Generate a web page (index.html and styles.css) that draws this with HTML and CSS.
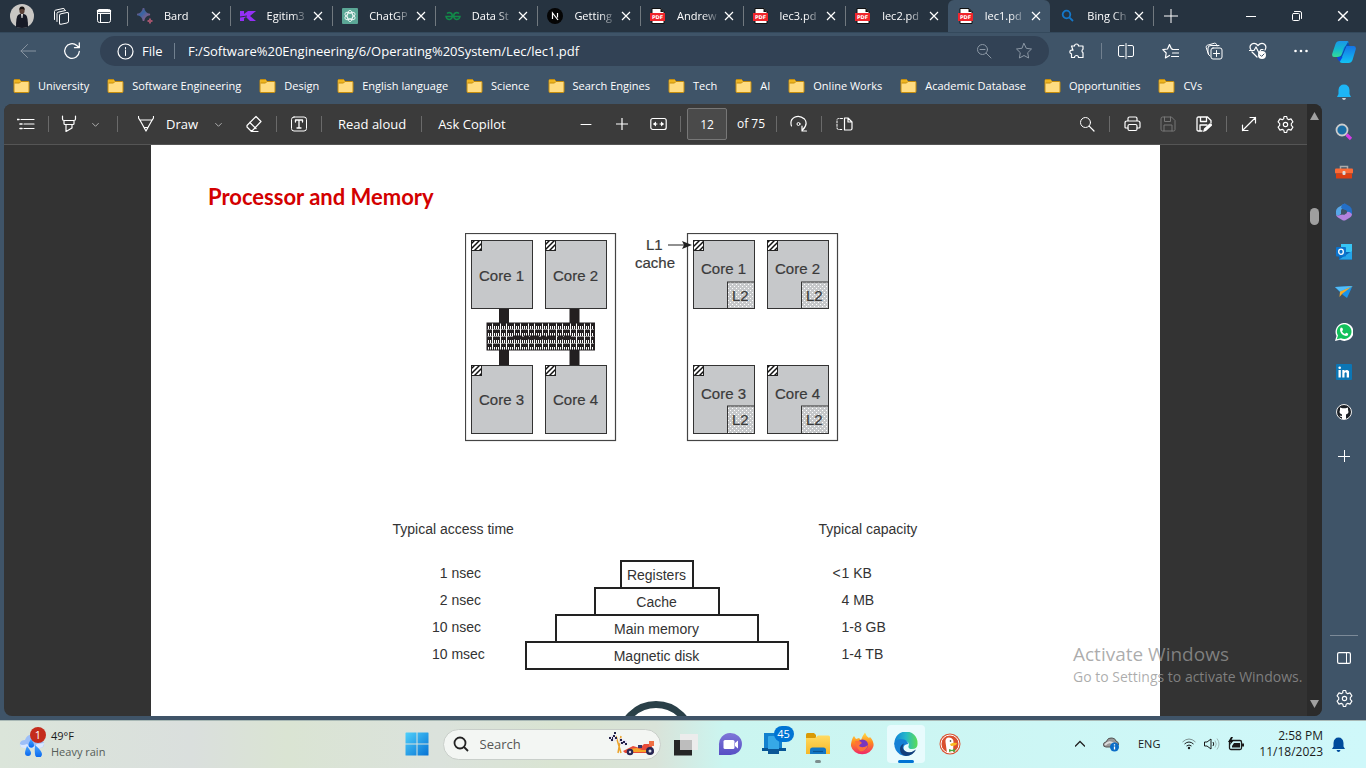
FILE: index.html
```html
<!DOCTYPE html>
<html lang="en">
<head>
<meta charset="utf-8">
<title>lec1.pdf</title>
<link rel="stylesheet" href="styles.css">
</head>
<body>
<svg class="defs" aria-hidden="true">
  <defs>
    <linearGradient id="g-win" x1="0" y1="0" x2="1" y2="1"><stop offset="0" stop-color="#4fd0fb"/><stop offset="1" stop-color="#0672d4"/></linearGradient>
    <linearGradient id="g-copL" x1="0" y1="0" x2="0" y2="1"><stop offset="0" stop-color="#1b96e8"/><stop offset=".5" stop-color="#13b8cf"/><stop offset="1" stop-color="#35dd95"/></linearGradient>
    <linearGradient id="g-copR" x1="0" y1="0" x2="0" y2="1"><stop offset="0" stop-color="#1573e6"/><stop offset="1" stop-color="#11c3f3"/></linearGradient>
    <linearGradient id="g-bard" x1="0" y1="0" x2="1" y2="1"><stop offset="0" stop-color="#b5485f"/><stop offset=".4" stop-color="#3565a5"/><stop offset="1" stop-color="#b85a77"/></linearGradient>
    <linearGradient id="g-edge" x1="0" y1="0" x2="1" y2="0"><stop offset="0" stop-color="#1183d8"/><stop offset=".5" stop-color="#25b8c9"/><stop offset="1" stop-color="#5bdd55"/></linearGradient>
    <linearGradient id="g-fox" x1="0" y1="0" x2="0" y2="1"><stop offset="0" stop-color="#ffe14a"/><stop offset=".45" stop-color="#ff8a1f"/><stop offset="1" stop-color="#f0256a"/></linearGradient>
    <linearGradient id="g-chat" x1="0" y1="0" x2="0" y2="1"><stop offset="0" stop-color="#7f76d8"/><stop offset="1" stop-color="#574fc4"/></linearGradient>
    <linearGradient id="g-drop" x1="0" y1="0" x2="0" y2="1"><stop offset="0" stop-color="#49a5ff"/><stop offset="1" stop-color="#0968ef"/></linearGradient>
    <linearGradient id="g-file" x1="0" y1="0" x2="0" y2="1"><stop offset="0" stop-color="#ffdb62"/><stop offset="1" stop-color="#f6b829"/></linearGradient>
    <pattern id="p-hatch" width="5" height="5" patternUnits="userSpaceOnUse"><rect width="5" height="5" fill="#fff"/><path d="M-1 6L6 -1M-1 1L1 -1M4 6L6 4" stroke="#111" stroke-width="1.500"/></pattern>
    <pattern id="p-dots" width="4" height="4" patternUnits="userSpaceOnUse"><rect width="4" height="4" fill="#c6c8ca"/><path d="M0 0h1v1H0zM2 2h1v1H2z" fill="#fff"/></pattern>
    <pattern id="p-mesh" x="487" y="323" width="14" height="7" patternUnits="userSpaceOnUse"><rect width="14" height="7" fill="#231f20"/><path d="M1 3h1v3H1zM3 3h1v3H3zM7 3h1v3H7zM9 3h1v3H9zM11 3h1v3H11zM5 0h1v7H5zM13 0h1v7H13zM0 6h14v.500H0z" fill="#fff"/></pattern>
    <symbol id="i-folder" viewBox="0 0 16 16"><path d="M.5 2.500Q.5 1.500 1.500 1.500H6L7.500 3.500H15Q15.500 3.500 15.500 4.500V13.500Q15.500 14.500 14.500 14.500H1.500Q.5 14.500 .5 13.500Z" fill="#ffdc81" stroke="#c68d0c"/><path d="M1 2h5l1 1.500L6 5H1Z" fill="#efb51f"/><path d="M1 5H6L7.500 3.500" stroke="#c68d0c" fill="none"/></symbol>
    <symbol id="i-x" viewBox="0 0 10 10"><path d="M1 1L9 9M9 1L1 9" fill="none" stroke="currentColor" stroke-width="1.2"/></symbol>
    <symbol id="i-pdf" viewBox="0 0 16 16"><path d="M2 .5H11L14 3.500V15.500H2Z" fill="#fff" stroke="#111"/><path d="M10.500 0V4H14Z" fill="#111"/><rect x="0" y="5" width="15" height="8" fill="#f0252b"/><text x="7.500" y="11" text-anchor="middle" class="pdf-mark">PDF</text></symbol>
    <symbol id="i-chev" viewBox="0 0 10 10"><path d="M1.500 3.500L5 7L8.500 3.500" fill="none" stroke="currentColor"/></symbol>
    <symbol id="i-gear" viewBox="0 0 20 20"><path d="M8.200 2.200L8.700 1.600H11.300L11.800 4L13.400 4.900L15.800 4.100L17.800 7.200L16.100 9V11L17.800 12.800L15.800 15.900L13.400 15.100L11.800 16L11.300 18.400H8.700L8.200 16L6.600 15.100L4.200 15.900L2.200 12.800L3.900 11V9L2.200 7.200L4.200 4.100L6.600 4.900L8.200 4Z" fill="none" stroke="currentColor" stroke-width="1.200" stroke-linejoin="round"/><circle cx="10" cy="10" r="2.300" fill="none" stroke="currentColor" stroke-width="1.200"/></symbol>
  </defs>
</svg>

<header class="tabbar">
  <div class="tabbar-tools">
    <button class="avatar" aria-label="Profile"><svg width="24" height="24" viewBox="0 0 24 24"><circle cx="12" cy="12" r="12" fill="#c9c7c4"/><path d="M6 23Q6 13 8 11L12 9L16 11Q18 13 18 23Q12 25 6 23Z" fill="#171a26"/><path d="M11 10h2l-.500 4h-1Z" fill="#ddd"/><ellipse cx="12" cy="6.500" rx="2.600" ry="3.500" fill="#5a4036"/><path d="M9.400 6Q9 2.500 12 2.500T14.600 6Q12 4 9.400 6Z" fill="#17110f"/></svg></button>
    <button class="icon-btn" aria-label="Workspaces"><svg width="18" height="18" viewBox="0 0 18 18" class="ln"><rect x="6.500" y="5.500" width="9" height="10.500" rx="1.500" transform="skewY(-12) translate(0 3)"/><path d="M4 14.500V6.500Q4 5.500 5 5.200L12.500 3.500M1.500 12.500V4.500Q1.500 3.500 2.500 3.200L10 1.500Q11.500 1.300 11.700 2.500"/></svg></button>
    <button class="icon-btn" aria-label="Tab actions"><svg width="16" height="16" viewBox="0 0 16 16" class="ln"><rect x="1.500" y="1.500" width="13" height="13" rx="2"/><path d="M2 3H14" stroke-width="2.500"/><path d="M1.500 5.500H14.500M4.500 6V14"/></svg></button>
  </div>
  <nav class="tabs" aria-label="Tabs">
    <div class="tab"><svg width="16" height="16" viewBox="0 0 16 16"><path d="M6.500 0Q7.200 5.800 13 6.500Q7.200 7.200 6.500 13Q5.800 7.200 0 6.500Q5.800 5.800 6.500 0Z" fill="url(#g-bard)" stroke="url(#g-bard)" stroke-width="1.500"/><path d="M13 10.500Q13.300 12.700 15.500 13Q13.300 13.300 13 15.500Q12.700 13.300 10.500 13Q12.700 12.700 13 10.500Z" fill="#a8566f" stroke="#a8566f"/></svg><span>Bard</span><button aria-label="Close tab"><svg width="10" height="10"><use href="#i-x"/></svg></button></div>
    <div class="tab"><svg width="16" height="16" viewBox="0 0 16 16"><path d="M0 3H4V6L8 3H16L10 8L16 13H10L6 9L4 10.500V13H0Z" fill="#9430f5"/><path d="M0 9L7 8" stroke="#263340"/></svg><span>Egitim3</span><button aria-label="Close tab"><svg width="10" height="10"><use href="#i-x"/></svg></button></div>
    <div class="tab"><svg width="16" height="16" viewBox="0 0 16 16"><rect width="16" height="16" rx="1" fill="#5ba796"/><g fill="none" stroke="#fff" stroke-width=".8"><ellipse cx="8" cy="8" rx="2.800" ry="5.600"/><ellipse cx="8" cy="8" rx="2.800" ry="5.600" transform="rotate(60 8 8)"/><ellipse cx="8" cy="8" rx="2.800" ry="5.600" transform="rotate(120 8 8)"/></g></svg><span>ChatGP</span><button aria-label="Close tab"><svg width="10" height="10"><use href="#i-x"/></svg></button></div>
    <div class="tab"><svg width="16" height="16" viewBox="0 0 16 16" fill="none" stroke="#128a49" stroke-width="1.500"><path d="M2 5.500Q3 4.500 4.500 4.500Q7.300 5 7.300 8T4.500 11.500Q1.500 11.500 1 8.500H15Q14.500 11.500 11.500 11.500Q8.700 11 8.700 8T11.500 4.500Q13 4.500 14 5.500"/></svg><span>Data St</span><button aria-label="Close tab"><svg width="10" height="10"><use href="#i-x"/></svg></button></div>
    <div class="tab"><svg width="16" height="16" viewBox="0 0 16 16"><circle cx="8" cy="8" r="8" fill="#050505"/><path d="M5.500 11V5L11 12M10.500 5V9.500" fill="none" stroke="#fff" stroke-width="1.200"/></svg><span>Getting</span><button aria-label="Close tab"><svg width="10" height="10"><use href="#i-x"/></svg></button></div>
    <div class="tab"><svg width="16" height="16"><use href="#i-pdf"/></svg><span>Andrew</span><button aria-label="Close tab"><svg width="10" height="10"><use href="#i-x"/></svg></button></div>
    <div class="tab"><svg width="16" height="16"><use href="#i-pdf"/></svg><span>lec3.pd</span><button aria-label="Close tab"><svg width="10" height="10"><use href="#i-x"/></svg></button></div>
    <div class="tab"><svg width="16" height="16"><use href="#i-pdf"/></svg><span>lec2.pd</span><button aria-label="Close tab"><svg width="10" height="10"><use href="#i-x"/></svg></button></div>
    <div class="tab active"><svg width="16" height="16"><use href="#i-pdf"/></svg><span>lec1.pd</span><button aria-label="Close tab"><svg width="10" height="10"><use href="#i-x"/></svg></button></div>
    <div class="tab after-active"><svg width="16" height="16" viewBox="0 0 16 16" fill="none" stroke="#1478ca" stroke-width="1.800"><circle cx="6.500" cy="6.500" r="3.800"/><path d="M9.300 9.300L13 13"/></svg><span>Bing Ch</span><button aria-label="Close tab"><svg width="10" height="10"><use href="#i-x"/></svg></button></div>
    <button class="new-tab" aria-label="New tab"><svg width="14" height="14" viewBox="0 0 14 14" class="ln"><path d="M7 0V14M0 7H14"/></svg></button>
  </nav>
  <div class="win-controls">
    <button aria-label="Minimize"><svg width="10" height="10" viewBox="0 0 10 10" class="ln"><path d="M0 5.500H10"/></svg></button>
    <button aria-label="Restore"><svg width="10" height="10" viewBox="0 0 10 10" class="ln"><rect x=".5" y="2.500" width="7" height="7" rx="1"/><path d="M2.500 .5H8Q9.500 .5 9.500 2V7.500"/></svg></button>
    <button aria-label="Close"><svg width="12" height="12"><use href="#i-x"/></svg></button>
  </div>
</header>

<div class="browser">
  <div class="browser-main">
    <div class="navbar">
      <button class="nav-btn dim" aria-label="Back"><svg width="16" height="16" viewBox="0 0 16 16" class="ln"><path d="M16 8H1M7.500 1.500L1 8L7.500 14.500"/></svg></button>
      <button class="nav-btn" aria-label="Refresh"><svg width="18" height="18" viewBox="0 0 18 18" class="ln"><path d="M16.300 9.500A7.300 7.300 0 1 1 13.800 3.500L16 5.500M16.300 1V5.700H11.500" stroke-width="1.300"/></svg></button>
      <div class="address">
        <svg width="17" height="17" viewBox="0 0 17 17" class="ln"><circle cx="8.500" cy="8.500" r="7.500" stroke-width="1.200"/><path d="M8.500 7.500V12.500M8.500 4.500V6"/></svg>
        <span class="scheme">File</span>
        <span class="vsep"></span>
        <input type="text" aria-label="Address" value="F:/Software%20Engineering/6/Operating%20System/Lec/lec1.pdf">
        <button class="addr-btn" aria-label="Zoom"><svg width="16" height="16" viewBox="0 0 16 16" class="ln"><circle cx="6.500" cy="6.500" r="5"/><path d="M4 6.500H9M10.200 10.200L15 15"/></svg></button>
        <button class="addr-btn" aria-label="Favorite"><svg width="18" height="18" viewBox="0 0 18 18" class="ln"><path d="M9 1.500L11.300 6.300L16.500 7L12.700 10.700L13.600 16L9 13.500L4.400 16L5.300 10.700L1.500 7L6.700 6.300Z"/></svg></button>
      </div>
      <div class="nav-actions">
        <button aria-label="Extensions" class="ext"><svg width="16" height="16" viewBox="0 0 16 16" class="ln"><path d="M2.500 3H5.500A2 2 0 0 1 9.500 3H14V6.300A2 2 0 0 0 14 9.800V14.500H9.500A2 2 0 0 0 5.500 14.500H2.500V10.800Q.8 10.500 .8 9T2.500 7.200H4Z" stroke-width="1.200"/></svg></button>
        <span class="vsep"></span>
        <button aria-label="Split screen"><svg width="16" height="16" viewBox="0 0 16 16" class="ln"><path d="M6 2.500H2Q.5 2.500 .5 4V12Q.5 13.500 2 13.500H6M10 2.500H14Q15.500 2.500 15.500 4V12Q15.500 13.500 14 13.500H10M8 .5V15.500"/></svg></button>
        <button aria-label="Favorites"><svg width="17" height="17" viewBox="0 0 17 17" class="ln"><path d="M10.500 6H9.500L7.500 1.500L5.500 6L.8 6.600L4.200 10L3.400 15L7.500 12.500M10.500 6.500H16.500M10.500 10H16.500M9.500 13.500H16.500" stroke-width="1.200"/></svg></button>
        <button aria-label="Collections"><svg width="18" height="18" viewBox="0 0 18 18" class="ln"><rect x="6" y="6" width="11" height="11" rx="2"/><path d="M11.500 8.500V14.500M8.500 11.500H14.500M3.500 12.500L1.200 5.500Q.8 4 2.300 3.300L9.500 1.200Q11 1 11.500 2.500L12 4M5 14Q3 13 3 10V6Q3 3.500 6 3.500H14"/></svg></button>
        <button aria-label="Browser essentials"><svg width="18" height="18" viewBox="0 0 18 18" class="ln"><path d="M2 8Q-.2 4.500 2.500 2.200Q6 .2 9 3.500Q12 .2 15.500 2.200Q18 4.500 16 8M3 10L8 15M.5 8.500H5L7 5L10 11L12 7.500H14" stroke-width="1.200"/><circle cx="13" cy="13" r="4" fill="#fff" stroke="none"/><path d="M11.200 13L12.600 14.400L15 12" stroke="#3f5468"/></svg></button>
        <button aria-label="Settings and more" class="more"><svg width="14" height="4" viewBox="0 0 14 4" fill="#fff"><circle cx="1.500" cy="2" r="1.300"/><circle cx="7" cy="2" r="1.300"/><circle cx="12.500" cy="2" r="1.300"/></svg></button>
      </div>
    </div>

    <nav class="bookmarks" aria-label="Favorites">
      <a href="#"><svg width="17" height="16"><use href="#i-folder"/></svg>University</a>
      <a href="#"><svg width="17" height="16"><use href="#i-folder"/></svg>Software Engineering</a>
      <a href="#"><svg width="17" height="16"><use href="#i-folder"/></svg>Design</a>
      <a href="#"><svg width="17" height="16"><use href="#i-folder"/></svg>English language</a>
      <a href="#"><svg width="17" height="16"><use href="#i-folder"/></svg>Science</a>
      <a href="#"><svg width="17" height="16"><use href="#i-folder"/></svg>Search Engines</a>
      <a href="#"><svg width="17" height="16"><use href="#i-folder"/></svg>Tech</a>
      <a href="#"><svg width="17" height="16"><use href="#i-folder"/></svg>AI</a>
      <a href="#"><svg width="17" height="16"><use href="#i-folder"/></svg>Online Works</a>
      <a href="#"><svg width="17" height="16"><use href="#i-folder"/></svg>Academic Database</a>
      <a href="#"><svg width="17" height="16"><use href="#i-folder"/></svg>Opportunities</a>
      <a href="#"><svg width="17" height="16"><use href="#i-folder"/></svg>CVs</a>
    </nav>

    <div class="viewer">
      <div class="viewer-body">
        <div class="pdfbar">
          <div class="pdf-left">
            <button class="tb" aria-label="Contents"><svg width="18" height="14" viewBox="0 0 18 14" class="ln"><path d="M4 2.500H17M7 7H17M7 11.500H17" stroke-width="1.200"/><path d="M0 2.500H2M3 7H5M3 11.500H5" stroke-width="1.600"/></svg></button>
            <span class="tsep"></span>
            <button class="tb hl" aria-label="Highlight"><svg width="16" height="18" viewBox="0 0 16 18" class="ln"><path d="M1.500 1V4Q1.500 5.500 3 5.500H13Q14.500 5.500 14.500 4V1M3 5.500V8.500Q3 9.500 4 9.500H12Q13 9.500 13 8.500V5.500M5 9.500V16.500L11 13V9.500" stroke-width="1.200"/></svg></button>
            <button class="tb chev first" aria-label="Highlight options"><svg width="9" height="9"><use href="#i-chev"/></svg></button>
            <span class="tsep"></span>
            <button class="tb draw"><svg width="16" height="16" viewBox="0 0 16 16" class="ln"><path d="M.5 .5V2L3 6L8 15L13 6L15.500 2V.5M2 4H14M6 11.500L8 15L10 11.500Z" stroke-width="1.200"/></svg>Draw</button>
            <button class="tb chev" aria-label="Draw options"><svg width="9" height="9"><use href="#i-chev"/></svg></button>
            <button class="tb erase" aria-label="Erase"><svg width="16" height="18" viewBox="0 0 16 18" class="ln"><path d="M10 1.500L15 6.500L6.500 15.500H4.500L1 12V10.500ZM3.800 7.500L10 13.500M5 16.500H12" stroke-width="1.200"/></svg></button>
            <span class="tsep"></span>
            <button class="tb" aria-label="Add text"><svg width="16" height="16" viewBox="0 0 16 16" class="ln"><rect x=".5" y="1" width="15" height="14" rx="2.500"/><path d="M4.500 6V4H11.500V6M8 4V12M6 12H10" stroke-width="1.300"/></svg></button>
            <span class="tsep"></span>
            <button class="tb label">Read aloud</button>
            <span class="tsep"></span>
            <button class="tb label">Ask Copilot</button>
          </div>
          <div class="pdf-mid">
            <button class="tb" aria-label="Zoom out"><svg width="12" height="12" viewBox="0 0 12 12" class="ln"><path d="M1 6.500H11"/></svg></button>
            <button class="tb" aria-label="Zoom in"><svg width="12" height="12" viewBox="0 0 12 12" class="ln"><path d="M0 6H12M6 0V12" stroke-width="1.200"/></svg></button>
            <button class="tb" aria-label="Fit to width"><svg width="17" height="14" viewBox="0 0 17 14" class="ln"><rect x=".8" y="1.500" width="15.400" height="11" rx="2" stroke-width="1.200"/><path d="M4 7H7M10 7H13"/><path d="M6 4.500V9.500L3 7ZM11 4.500V9.500L14 7Z" fill="#fff" stroke="none"/></svg></button>
            <span class="tsep"></span>
            <input class="page-no" type="text" aria-label="Page number" value="12">
            <span class="page-total">of 75</span>
            <span class="tsep"></span>
            <button class="tb" aria-label="Rotate"><svg width="18" height="18" viewBox="0 0 18 18" class="ln"><path d="M1.500 11Q-.5 5 4.500 2.300T14.500 4Q18.500 9 12.500 15M12 11V16H16.500" stroke-width="1.200"/><circle cx="8.500" cy="9" r="1.500"/></svg></button>
            <span class="tsep"></span>
            <button class="tb" aria-label="Page view"><svg width="17" height="14" viewBox="0 0 17 14" class="ln"><path d="M8.500 1V13H14.500Q16 13 16 11.500V5L12 1ZM12 1V5H16" stroke-width="1.200"/><path d="M6.500 1.500H2.500Q1 1.500 1 3V11Q1 12.500 2.500 12.500H6.500" stroke-dasharray="2 1.500"/></svg></button>
          </div>
          <div class="pdf-right">
            <button class="tb" aria-label="Find"><svg width="16" height="16" viewBox="0 0 16 16" class="ln"><circle cx="6.500" cy="6.500" r="5"/><path d="M10.200 10.200L15 15" stroke-width="1.200"/></svg></button>
            <span class="tsep"></span>
            <button class="tb" aria-label="Print"><svg width="17" height="16" viewBox="0 0 17 16" class="ln"><path d="M4 5V2.500Q4 1 5.500 1H11.500Q13 1 13 2.500V5M4 12H2Q1 12 1 11V7Q1 5 3 5H14Q16 5 16 7V11Q16 12 15 12H13" stroke-width="1.200"/><rect x="4" y="8.500" width="9" height="6" rx="1.500" stroke-width="1.200"/></svg></button>
            <button class="tb dim" aria-label="Save"><svg width="16" height="16" viewBox="0 0 16 16" class="ln"><path d="M1 2.500Q1 1 2.500 1H11.500L15 4.500V13.500Q15 15 13.500 15H2.500Q1 15 1 13.500ZM4.500 1V5.500H10.500V1M4 15V9H12V15"/></svg></button>
            <button class="tb" aria-label="Save as"><svg width="17" height="17" viewBox="0 0 17 17" class="ln"><path d="M6 15H2.500Q1 15 1 13.500V2.500Q1 1 2.500 1H11.500L15 4.500V7M4.500 1V5.500H10.500V1M4 15V9H11" stroke-width="1.300"/><path d="M7 16L8 12.500L13.500 7.500Q15 7 16 8.500Q16.300 9.500 15.500 10L10 15Z" fill="#fff" stroke="none"/></svg></button>
            <span class="tsep"></span>
            <button class="tb" aria-label="Full screen"><svg width="16" height="16" viewBox="0 0 16 16" class="ln"><path d="M9 1.500H14.500V7M1.500 9V14.500H7M14.500 1.500L1.500 14.500" stroke-width="1.200"/></svg></button>
            <button class="tb" aria-label="PDF settings"><svg width="19" height="19"><use href="#i-gear"/></svg></button>
          </div>
        </div>

        <main class="canvas">
          <article class="page">
            <h1>Processor and Memory</h1>
            <svg class="cores" width="381" height="209" viewBox="465 233 381 209" role="img" aria-label="Quad-core chips">
              <g fill="#fff" stroke="#444" stroke-width="1.200"><rect x="465.500" y="233.500" width="150" height="207"/><rect x="687.500" y="233.500" width="150" height="207"/></g>
              <path d="M499 308h10v58h-10zM569.500 308h10v58h-10z" fill="#231f20"/>
              <g fill="#c6c8ca" stroke="#333">
                <rect x="471.500" y="240.500" width="61" height="68"/><rect x="545.500" y="240.500" width="61" height="68"/><rect x="471.500" y="365.500" width="61" height="68"/><rect x="545.500" y="365.500" width="61" height="68"/>
                <rect x="693.500" y="240.500" width="61" height="68"/><rect x="767.500" y="240.500" width="61" height="68"/><rect x="693.500" y="365.500" width="61" height="68"/><rect x="767.500" y="365.500" width="61" height="68"/>
              </g>
              <g fill="url(#p-hatch)" stroke="#222">
                <rect x="471.500" y="240.500" width="10" height="10"/><rect x="545.500" y="240.500" width="10" height="10"/><rect x="471.500" y="365.500" width="10" height="10"/><rect x="545.500" y="365.500" width="10" height="10"/>
                <rect x="693.500" y="240.500" width="10" height="10"/><rect x="767.500" y="240.500" width="10" height="10"/><rect x="693.500" y="365.500" width="10" height="10"/><rect x="767.500" y="365.500" width="10" height="10"/>
              </g>
              <g fill="url(#p-dots)" stroke="#333">
                <rect x="727.500" y="282" width="27" height="26.500"/><rect x="801.500" y="282" width="27" height="26.500"/><rect x="727.500" y="406" width="27" height="27.500"/><rect x="801.500" y="406" width="27" height="27.500"/>
              </g>
              <rect x="487" y="323" width="107.500" height="27" fill="url(#p-mesh)" stroke="#231f20"/>
              <path d="M513 337.500h58" stroke="#231f20" stroke-width="4" stroke-dasharray="9 2 5 1"/>
              <path d="M668 245h17" stroke="#222" stroke-width="1.200"/><path d="M692 245l-10-4 2 4-2 4Z" fill="#222"/>
              <g class="fig-text">
                <text x="479" y="281">Core 1</text><text x="553" y="281">Core 2</text><text x="479" y="405">Core 3</text><text x="553" y="405">Core 4</text>
                <text x="701" y="274">Core 1</text><text x="775" y="274">Core 2</text><text x="701" y="399">Core 3</text><text x="775" y="399">Core 4</text>
                <text x="732" y="301">L2</text><text x="806" y="301">L2</text><text x="732" y="425">L2</text><text x="806" y="425">L2</text>
                <text x="646" y="250">L1</text><text x="635" y="268">cache</text>
              </g>
            </svg>
            <table class="hierarchy">
              <thead><tr><th>Typical access time</th><th></th><th class="cap">Typical capacity</th></tr></thead>
              <tbody>
                <tr><td><span class="num">1</span> nsec</td><td><div class="level w1">Registers</div></td><td class="cap"><span class="lt">&lt;</span>1 KB</td></tr>
                <tr><td><span class="num">2</span> nsec</td><td><div class="level w2">Cache</div></td><td class="cap"><span class="lt"></span>4 MB</td></tr>
                <tr><td><span class="num">10</span> nsec</td><td><div class="level w3">Main memory</div></td><td class="cap"><span class="lt"></span>1-8 GB</td></tr>
                <tr><td><span class="num">10</span> msec</td><td><div class="level w4">Magnetic disk</div></td><td class="cap"><span class="lt"></span>1-4 TB</td></tr>
              </tbody>
            </table>
            <div class="ring"></div>
          </article>
        </main>
      </div>
      <div class="scrollbar">
        <svg width="9" height="8" viewBox="0 0 9 8"><path d="M4.500 0L9 8H0Z" fill="#a0a0a0"/></svg>
        <span class="thumb"></span>
        <svg class="down" width="9" height="8" viewBox="0 0 9 8"><path d="M4.500 8L9 0H0Z" fill="#a0a0a0"/></svg>
      </div>
    </div>
  </div>

  <aside class="sidebar">
    <button aria-label="Copilot"><svg width="24" height="24" viewBox="0 0 24 24"><path d="M7.500 1H15Q17 1 16.300 3L12.500 15.500Q12 17 10 17H2Q-.5 17 .3 13.500L3.500 4Q4.500 1 7.500 1Z" fill="url(#g-copL)"/><path d="M16.500 23H10Q7 23 8 20L11.500 8.500Q12.300 6 14.500 6H21.500Q24.500 6 23.700 9.500L20.500 20Q19.500 23 16.500 23Z" fill="url(#g-copR)"/><path d="M13 7L16 2Q17 5 18 6H14.500L10 17H5Q9 17 10 14Z" fill="#0b4fae"/><path d="M5 17H10.500L8 21.500Q6 21 5 17Z" fill="#0a48e0"/></svg></button>
    <button aria-label="Notifications"><svg width="16" height="18" viewBox="0 0 16 18"><path d="M1 14L2.500 11V7Q3 1.500 8 1.500T13.500 7V11L15 14Z" fill="#1db5f5"/><path d="M6 15h4Q9.500 17 8 17T6 15Z" fill="#cfd3d6"/></svg></button>
    <button aria-label="Search"><svg width="18" height="18" viewBox="0 0 18 18"><path d="M11.500 11.500L16 16" stroke="#d43be6" stroke-width="3.200"/><circle cx="7" cy="7" r="5.500" fill="#1b6ea5" stroke="#ccc" stroke-width="1.800"/></svg></button>
    <button aria-label="Tools"><svg width="18" height="16" viewBox="0 0 18 16"><path d="M5.500 5V2.500H12.500V5" fill="none" stroke="#aaa" stroke-width="1.500"/><rect x="0" y="4.500" width="18" height="5" rx="1" fill="#fc6b36"/><path d="M1 9.500h16V14q0 .5-.5.500h-15q-.5 0-.5-.5Z" fill="#dc3f12"/><rect x="7.500" y="7" width="3" height="4" rx="1" fill="#ddd"/></svg></button>
    <button aria-label="Microsoft 365"><svg width="18" height="18" viewBox="0 0 18 18"><path d="M10 .5L3 4.500Q1 6 1 8V11Q1 13 3 13L6 11V8Q6 6 8 5Z" fill="#56a7e8"/><path d="M7 1.500L10 .5L15 3.500Q17 5 17 8V12L12 10V8L6 5Z" fill="#246fc7"/><path d="M1 11Q2 14 5 12L8 11.500L12 9Q14 8 17 11Q17 13 15 14.500L10 17.500H8L3 14.500Q1 13 1 11Z" fill="#b482df"/><path d="M7 7L11 7L12 10L9 12L6 10Z" fill="#3f5468"/></svg></button>
    <button aria-label="Outlook"><svg width="16" height="16" viewBox="0 0 16 16"><rect x="5" y="0" width="11" height="8" fill="#38c6f5"/><path d="M3 8H16V15.500H3Z" fill="#0a67b8"/><path d="M3 15.500L16 7V15.500Z" fill="#23a4ea"/><rect y="3" width="10" height="9.500" rx="1" fill="#0b74ce"/><ellipse cx="5" cy="7.800" rx="2.300" ry="2.600" fill="none" stroke="#fff" stroke-width="1.300"/></svg></button>
    <button aria-label="Drop"><svg width="18" height="14" viewBox="0 0 18 14"><path d="M0 2L17.500 1L12 13L8 10Z" fill="#1793eb"/><path d="M17.500 1L5 6.500L4.500 12L7.500 8.500Z" fill="#f4ab27"/><path d="M0 2L17.500 1L5 6.500Z" fill="#53bdf8"/></svg></button>
    <button aria-label="WhatsApp"><svg width="18" height="18" viewBox="0 0 18 18"><path d="M0 18L1.500 13A9 9 0 1 1 5 16.700Z" fill="#fff"/><path d="M1.800 16.200L3 12.500A7.300 7.300 0 1 1 6 15.200Z" fill="#13c15b"/><path d="M6 4.500L7.500 5L8 7L7 8.300Q8 10.500 10 11L11.200 9.700L13.300 10.800Q13.300 13 11 13Q5.500 12 5 7Q5 5 6 4.500Z" fill="#fff"/></svg></button>
    <button aria-label="LinkedIn"><svg width="16" height="16" viewBox="0 0 16 16"><rect width="16" height="16" rx="1" fill="#0c76b5"/><path d="M2.500 6h2.300v7.500H2.500zM6.300 6h2.200v1q2.500-2 4.500.2V13.500h-2.300V9q-1.200-1.500-2.200.2V13.500H6.300z" fill="#fff"/><circle cx="3.700" cy="3.700" r="1.300" fill="#fff"/></svg></button>
    <button aria-label="GitHub"><svg width="16" height="16" viewBox="0 0 16 16"><circle cx="8" cy="8" r="7.500" fill="#1c2025" stroke="#eee"/><path d="M4 3.500L6.500 4.300H9.500L12 3.500V6Q13.500 9.500 10 10.500V15H6V13Q4 13 3.500 11.500Q5 11.500 6 12V10.500Q2.500 9.500 4 6Z" fill="#fff"/></svg></button>
    <button class="add" aria-label="Customize"><svg width="12" height="12" viewBox="0 0 12 12" class="ln"><path d="M0 6.500H12M6.500 0V12"/></svg></button>
    <hr>
    <button aria-label="Sidebar"><svg width="14" height="12" viewBox="0 0 14 12" class="ln"><rect x=".6" y=".6" width="12.800" height="10.800" rx="1.500" stroke-width="1.200"/><path d="M9.500 1V11"/></svg></button>
    <button aria-label="Settings"><svg width="19" height="19"><use href="#i-gear"/></svg></button>
  </aside>
</div>

<div class="watermark"><p class="big">Activate Windows</p><p>Go to Settings to activate Windows.</p></div>

<footer class="taskbar">
  <div class="weather">
    <div class="weather-icon"><svg width="26" height="26" viewBox="0 0 26 26"><path d="M5 17Q0 16 1 12Q2 9 6 9Q8 3 14 4Q18 5 19 9Q25 9 25 13T20 17Z" fill="#9dbff8"/><path d="M1 13Q3 15 8 13Q14 18 18 13L25 12Q25 17 20 17H5Q1 17 1 13Z" fill="#dbe8ff"/><g fill="url(#g-drop)"><path d="M12 8Q15 12 15 14A2.600 2.600 0 0 1 9.500 14Q9.500 12 12 8Z"/><path d="M8 15Q12 20 12 22A3 3 0 0 1 6 22Q6 20 8 15Z"/><path d="M16 14Q23 20 23 23A3.200 3.200 0 0 1 16 23Q15.500 19 16 14Z"/></g></svg><span class="badge red">1</span></div>
    <div class="weather-text"><span>49°F</span><span class="muted">Heavy rain</span></div>
  </div>
  <div class="apps">
    <button aria-label="Start"><svg width="24" height="24" viewBox="0 0 24 24" fill="url(#g-win)"><path d="M1 .5H11.500V11.500H.5V1ZM12.500 .5H23Q23.500 .5 23.500 1V11.500H12.500ZM.5 12.500H11.500V23.500H1Q.5 23.500 .5 23ZM12.500 12.500H23.500V23Q23.500 23.500 23 23.500H12.500Z"/></svg></button>
    <label class="search"><svg width="16" height="16" viewBox="0 0 16 16" fill="none" stroke="#222" stroke-width="1.800"><circle cx="7" cy="7" r="5.500"/><path d="M11 11L15 15"/></svg><input type="text" aria-label="Search" placeholder="Search">
      <svg width="48" height="24" viewBox="0 0 48 24"><path d="M8 4L13 21M13 4L10 21" stroke="#eba32c" stroke-width="1.500"/><path d="M1 5L7 2L9 8L3 10ZM12 6L19 9L18 14L11 11Z" fill="#e7e4f5"/><path d="M1 5h2v2H1zM5 3h2v2H5zM3 7h2v2H3zM7 5h2v2H7zM4 5h1v2H4zM12 7h2v2h-2zM15 9h2v2h-2zM13 10h2v2h-2zM17 11h2v2h-2zM6 0h2v2H6z" fill="#242349"/><path d="M15 19L25 14L32 16L36 12H43L46 21H17Z" fill="#e84c39"/><path d="M22 17L29 16L34 18H43V20H22Z" fill="#f6a529"/><path d="M41 9H46V14H41Z" fill="#ef7044"/><g fill="#272653"><circle cx="22" cy="20" r="3.300"/><circle cx="42" cy="19" r="4"/></g><g fill="#d8dae8"><circle cx="22" cy="20" r="1.200"/><circle cx="42" cy="19" r="1.500"/></g><path d="M30 13h4v3h-4z" fill="#383567"/></svg></label>
    <button aria-label="Task view"><svg width="24" height="24" viewBox="0 0 24 24"><rect x="0" y="8" width="18" height="15.500" fill="#262626"/><rect x="6" y="2" width="18" height="16" fill="#ececec"/><rect x="6" y="8" width="12" height="10" fill="#bdbdbd"/></svg></button>
    <button aria-label="Chat"><svg width="24" height="24" viewBox="0 0 24 24"><path d="M1 23V13A11.500 11 0 1 1 12 23Z" fill="url(#g-chat)"/><rect x="5.500" y="8" width="11" height="9" rx="1.500" fill="#fff"/><path d="M17 11L20 8.500V16.500L17 14Z" fill="#fff"/></svg></button>
    <button aria-label="Phone Link"><svg width="24" height="24" viewBox="0 0 24 24"><path d="M2 1H20V17H2Z" fill="#1281cf"/><path d="M0 16H24V19H0Z" fill="#075695"/><rect x="6" y="4" width="11" height="18" rx="1" fill="#36a9e7"/><path d="M6 17H17V22H6Z" fill="#0b5796"/></svg><span class="badge blue">45</span></button>
    <button class="running" aria-label="File Explorer"><svg width="24" height="24" viewBox="0 0 24 24"><path d="M0 2.500Q0 1 1.500 1H8L10 3V9H0Z" fill="#d99a06"/><path d="M0 6H9L12 3.500H22.500Q24 3.500 24 5V22H0Z" fill="url(#g-file)"/><path d="M4 22V18Q4 15.500 6.500 15.500H17.500Q20 15.500 20 18V22Z" fill="#1276c4"/><path d="M7 19.500H17" stroke="#085493" stroke-width="1.200"/></svg></button>
    <button aria-label="Firefox"><svg width="24" height="24" viewBox="0 0 24 24"><path d="M1 12Q2 6 4 4L6 7L9 6L11 8Q13 3 15 .5Q16 4 19 6L20 5Q24 9 23.500 14A11.500 10.500 0 0 1 1 14Z" fill="url(#g-fox)"/><circle cx="12.500" cy="13" r="5.500" fill="#7b36bd"/><path d="M5 9Q10 8 12 11Q10 12 9 14Q13 17 18 13Q16 20 10 19Q6 16 5 9Z" fill="#ff7138"/></svg></button>
    <button class="current" aria-label="Microsoft Edge"><svg width="24" height="24" viewBox="0 0 24 24"><path d="M.5 11A11.500 11.500 0 0 1 23.500 11Q24 17 18 17Q14 17 14.500 14Q16 11 12 9Q5 7 .5 13Z" fill="url(#g-edge)"/><path d="M.3 11Q4 5.500 10 7.500Q14 9 14 12Q8 13 10 18Q13 22 18 22Q12 25.500 6 22.500Q0 18 .3 11Z" fill="#1580d5"/><path d="M10 11.500Q7 16 11 19Q16 22 22 17.500Q19 24 12 24Q6 23 6 17Q6 13 10 11.500Z" fill="#123f7c"/></svg></button>
    <button aria-label="DuckDuckGo"><svg width="22" height="22" viewBox="0 0 22 22"><circle cx="11" cy="11" r="10.500" fill="#d9502f"/><circle cx="11" cy="11" r="9" fill="none" stroke="#fff" stroke-width="1"/><path d="M8 20L6.500 9Q6 4.500 10 4.500Q15 5 14.500 10L14 19Z" fill="#fff"/><path d="M11 11Q15 9 18 10Q18 13 12 13Z" fill="#fbbb20"/><circle cx="11.500" cy="8" r=".8" fill="#222"/><path d="M10 16L13 17L16 15.500V19L13 18L10 19Z" fill="#4aa83e"/></svg></button>
  </div>
  <div class="tray">
    <button class="t-chev" aria-label="Show hidden icons"><svg width="10" height="10" viewBox="0 0 10 10"><path d="M0 7.500L5 2.500L10 7.500" fill="none" stroke="#222" stroke-width="1.300"/></svg></button>
    <button class="t-cloud" aria-label="OneDrive"><svg width="17" height="16" viewBox="0 0 17 16"><path d="M3 11Q0 11 .5 8Q1 6 3 6Q5 1 9 2Q12 2 13 5Q16 6 15.500 9Q14 11 12 11Z" fill="#999" stroke="#555"/><path d="M2 9Q6 4 11 8" stroke="#ddd" stroke-width="2" fill="none"/><circle cx="11.500" cy="11" r="4.500" fill="#0b6dc7"/><path d="M11.500 10.500V13.500M11.500 8.300V9.500" stroke="#fff" stroke-width="1.300"/></svg></button>
    <span class="lang">ENG</span>
    <button class="t-net" aria-label="Network, volume and battery"><svg width="14" height="12" viewBox="0 0 14 12" fill="none" stroke="#1b1b1b"><path d="M.5 4Q7-2 13.500 4" stroke="#7d9292"/><path d="M2.500 6Q7 2 11.500 6M4.500 8Q7 6 9.500 8"/><circle cx="7" cy="10" r="1.200" fill="#1b1b1b" stroke="none"/></svg><svg width="16" height="14" viewBox="0 0 16 14" fill="none" stroke="#1b1b1b"><path d="M.5 5V9H3L7 12V2L3 5ZM9 5Q10.500 7 9 9"/><path d="M11 3.500Q13.500 7 11 10.500M13 1.500Q17 7 13 12.500" stroke="#9fb8b8"/></svg><svg width="16" height="14" viewBox="0 0 16 14"><rect x="1.500" y="3.500" width="12" height="9" rx="1.500" fill="none" stroke="#1b1b1b" stroke-width="1.300"/><path d="M6 6H12V10.500H4V9ZM14 6.500H16V9.500H14Z" fill="#1b1b1b"/><path d="M3 0L0 5H2.500L2 8L6 3H3.500L5 0Z" fill="#111"/></svg></button>
    <div class="clock"><time>2:58 PM</time><span>11/18/2023</span></div>
    <button class="t-bell" aria-label="Notification center"><svg width="13" height="15" viewBox="0 0 13 15" fill="#004b9c"><path d="M0 12L1.500 9.500V6Q2 .5 6.500 .5T11.500 6V9.500L13 12ZM4.500 13H8.500Q8 15 6.500 15T4.500 13Z"/></svg></button>
  </div>
</footer>
</body>
</html>
```
FILE: styles.css
```css
* { box-sizing: border-box; }

body {
  margin: 0;
  height: 100vh;
  display: flex;
  flex-direction: column;
  overflow: hidden;
  background: #3f5468;
  color: #fff;
  font: 11px/16px "Open Sans", "Noto Sans", sans-serif;
}

button {
  display: flex;
  align-items: center;
  justify-content: center;
  padding: 0;
  border: 0;
  background: none;
  color: inherit;
  font: inherit;
}

input {
  min-width: 0;
  padding: 0;
  border: 0;
  background: none;
  color: inherit;
  font: inherit;
}

svg { display: block; flex: none; }
.defs { position: absolute; width: 0; height: 0; }
.ln { fill: none; stroke: currentColor; stroke-width: 1; stroke-linecap: round; stroke-linejoin: round; }
.pdf-mark { font: bold 5px "DejaVu Sans", sans-serif; fill: #fff; }

/* Tab strip */
.tabbar { display: flex; flex: none; height: 32px; background: #263340; }
.tabbar-tools { display: flex; flex: none; width: 127px; padding-left: 10px; }
.avatar { width: 24px; }
.icon-btn { width: 42px; }
.avatar + .icon-btn { margin-left: 7px; }
.tabs { display: flex; flex: 0 1 1062px; min-width: 0; }
.tab {
  display: flex;
  flex: 0 1 103px;
  min-width: 0;
  align-items: center;
  padding: 0 9px 0 10px;
  background: linear-gradient(#71797f, #71797f) 0 6px / 1px 20px no-repeat;
}
.tab span {
  flex: 1;
  margin-left: 11px;
  white-space: nowrap;
  -webkit-mask-image: linear-gradient(90deg, #000 60%, transparent);
  mask-image: linear-gradient(90deg, #000 60%, transparent);
}
.tab button { width: 10px; margin-left: 4px; }
.tab.active { background: #3f5468; border-radius: 6px 6px 0 0; }
.tab.after-active { background: none; }
.new-tab { flex: none; width: 36px; background: linear-gradient(#71797f, #71797f) 0 6px / 1px 20px no-repeat; }
.win-controls { display: flex; flex: none; margin-left: auto; }
.win-controls button { width: 46px; }

/* Browser frame */
.browser { display: flex; flex: 1; min-height: 0; box-shadow: inset 0 1px #34495c; }
.browser-main { display: flex; flex: 1; flex-direction: column; min-width: 0; }
.navbar { display: flex; flex: none; height: 38px; align-items: center; padding-left: 6px; }
.nav-btn { width: 44px; height: 30px; }
.dim { color: #8793a0; }
.vsep { width: 1px; height: 16px; background: #71808f; }
.address {
  display: flex;
  flex: 1;
  align-items: center;
  height: 30px;
  margin-left: 6px;
  padding: 0 5px 0 17px;
  border-radius: 15px;
  background: #324255;
  font-size: 13px;
}
.scheme { width: 32px; margin-left: 8px; }
.address input { flex: 1; margin-left: 13px; }
.addr-btn { width: 40px; color: #8c98a5; }
.nav-actions { display: flex; flex: none; align-items: center; width: 273px; padding-left: 4px; }
.nav-actions button { width: 44px; }
.nav-actions .ext { width: 48px; }
.nav-actions .vsep { margin-right: 2px; }
.nav-actions .more { width: 42px; }

.bookmarks { display: flex; flex: none; height: 34px; align-items: center; gap: 18px; padding: 0 0 2px 13px; }
.bookmarks a { display: flex; align-items: center; gap: 8px; color: #fff; text-decoration: none; white-space: nowrap; }

/* Viewer */
.viewer { display: flex; flex: 1; min-height: 0; margin: 0 0 4px 4px; overflow: hidden; border-radius: 8px; background: #333; }
.viewer-body { display: flex; flex: 1; flex-direction: column; min-width: 0; }
.pdfbar { display: flex; flex: none; height: 41px; padding: 0 4px; border-bottom: 1px solid #555; background: #3b3b3b; font-size: 13px; }
.pdf-left, .pdf-mid, .pdf-right { display: flex; align-items: center; }
.pdf-left { flex: 0 0 560px; }
.pdf-right { margin-left: auto; }
.tb { width: 36px; height: 32px; white-space: nowrap; }
.tb.dim { color: #777; }
.tb.hl { width: 32px; }
.tb.chev { width: 20px; color: #bbb; }
.tb.first { margin-right: 8px; }
.tb.draw { gap: 12px; width: 86px; padding-left: 16px; justify-content: flex-start; }
.tb.erase { margin-left: 8px; }
.tb.label { width: auto; padding: 0 11px 0 12px; }
.tsep { width: 1px; height: 16px; margin: 0 4px; background: #6a6a6a; }
.page-no { width: 40px; height: 32px; margin-left: 2px; border: 1px solid #777; border-radius: 2px; background: #4a4a4a; text-align: center; font-size: 12px; }
.page-total { width: 45px; padding-left: 10px; font-size: 12px; white-space: nowrap; }

.canvas { flex: 1; min-height: 0; overflow: hidden; }
.page {
  display: flow-root;
  min-height: 100%;
  max-width: 1009px;
  margin: 0 auto;
  background: #fff;
  color: #333;
  font: 14px/20px "Liberation Sans", Arial, sans-serif;
}
.page h1 { margin: 36px 0 0 57px; color: #d30000; font: bold 22px/32px Lato, sans-serif; }
.cores { margin: 20px auto 0; }
.fig-text { fill: #3a3a3a; stroke: #3a3a3a; stroke-width: .2px; font-size: 15px; }
.hierarchy { width: 526px; margin: 77px auto 0; border-collapse: collapse; }
.hierarchy th { height: 41px; padding: 0; font-weight: normal; text-align: left; vertical-align: top; white-space: nowrap; }
.hierarchy th:nth-child(1) { width: 132px; }
.hierarchy th:nth-child(2) { width: 264px; }
.hierarchy td { height: 27px; padding: 0; vertical-align: top; line-height: 27px; }
.hierarchy td:first-child { padding-left: 39px; }
.hierarchy .cap { padding-left: 30px; }
.hierarchy td.cap { padding-left: 44px; }
.num { display: inline-block; width: 16px; text-align: right; }
.lt { display: inline-block; width: 9px; }
.level { height: 29px; margin: 0 auto -2px; border: 2px solid #222; line-height: 26px; text-align: center; }
.w1 { width: 74px; }
.w2 { width: 126px; }
.w3 { width: 204px; }
.w4 { width: 264px; }
.ring { width: 78px; height: 78px; margin: 33px auto -78px; border: 7px solid #2a4048; border-radius: 50%; }

.scrollbar { display: flex; flex: none; flex-direction: column; align-items: center; width: 15px; padding: 8px 0; background: #2b2b2b; }
.thumb { width: 9px; height: 17px; margin-top: 88px; border-radius: 5px; background: #9f9f9f; }
.down { margin-top: auto; }

/* Edge sidebar */
.sidebar { display: flex; flex: none; flex-direction: column; width: 44px; padding-bottom: 2px; }
.sidebar button { flex: 0 1 40px; min-height: 0; }
.sidebar .add { margin-top: 4px; }
.sidebar hr { width: 28px; margin: auto 8px 2px; border: 0; border-top: 1px solid #7c8a98; }

.watermark { position: absolute; right: 57px; bottom: 81px; color: rgba(150, 150, 150, .78); font-size: 14px; white-space: nowrap; }
.watermark p { width: 236px; margin: 0; line-height: 20px; }
.watermark .big { font-size: 19px; line-height: 26px; }

/* Taskbar */
.taskbar {
  display: grid;
  grid-template-columns: 1fr auto 1fr;
  flex: none;
  align-items: center;
  height: 48px;
  box-shadow: inset 0 1px #a9b9b6;
  background: linear-gradient(90deg, #dbe5da 0, #dadfdd 14%, #dae4d3 21%, #dbe2dc 32%, #d9e4d2 41%, #d9e3d9 48%, #cbf5f0 53%, #cff8fa 100%);
  color: #1b1b1b;
}
.weather { display: flex; align-items: center; gap: 6px; padding-left: 19px; }
.weather-icon { position: relative; }
.weather-text { display: flex; flex-direction: column; }
.muted { color: #555d58; }
.badge { position: absolute; display: grid; place-items: center; height: 16px; border-radius: 8px; color: #fff; line-height: 16px; }
.badge.red { top: -4px; right: -1px; width: 16px; background: #c42b1c; }
.badge.blue { top: 6px; right: 2px; width: 20px; background: #0074d4; }
.apps { display: flex; align-items: center; }
.apps button { position: relative; width: 44px; height: 48px; }
.search {
  display: flex;
  align-items: center;
  gap: 11px;
  width: 218px;
  height: 31px;
  margin: 0 3px 0 4px;
  padding: 0 4px 0 9px;
  border: 1px solid #c9cfca;
  border-radius: 16px;
  background: #f3f6f3;
}
.search input { flex: 1; font-size: 13px; }
.search input::placeholder { color: #555; opacity: 1; }
.running::after, .current::after { content: ""; position: absolute; bottom: 5px; left: 19px; width: 6px; height: 3px; border-radius: 2px; background: #7d8e8e; }
.current::after { width: 16px; background: #0074d4; }
.apps .current { width: 38px; height: 38px; margin: 0 3px; border-radius: 4px; background: #e8fbfd; }
.apps .current::after { bottom: 0; left: 11px; }
.tray { display: flex; align-items: center; justify-content: flex-end; padding-right: 21px; }
.t-chev { margin-right: 18px; }
.t-cloud { margin-right: 18px; }
.lang { width: 43px; }
.t-net { gap: 8px; width: 64px; }
.clock { display: flex; flex-direction: column; width: 78px; font-size: 12px; text-align: right; }
.t-bell { margin-left: 9px; }
```
